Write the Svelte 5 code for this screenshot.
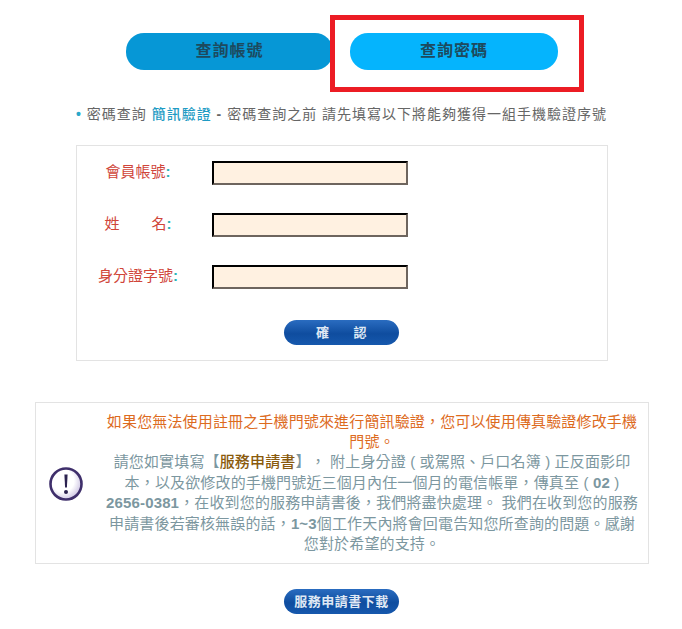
<script lang="ts">
  let fields = [
    { label: "會員帳號", wide: false, name: "account" },
    { label: "姓名", wide: true, name: "name" },
    { label: "身分證字號", wide: false, name: "id" }
  ];
</script>

<div class="page">
  <div class="tabs">
    <button class="tab dark">查詢帳號</button>
    <button class="tab light">查詢密碼</button>
    <div class="marker"></div>
  </div>

  <p class="intro">
    <span class="dot">•</span> 密碼查詢 <b class="blue">簡訊驗證</b> <b>-</b> 密碼查詢之前 請先填寫以下將能夠獲得一組手機驗證序號
  </p>

  <div class="form">
    {#each fields as f}
      <div class="row">
        <label for={f.name} class:spaced={f.wide}>
          {#if f.wide}<span>姓</span><span>名</span>{:else}{f.label}{/if}<i>:</i>
        </label>
        <input id={f.name} type="text" />
      </div>
    {/each}
    <div class="actions">
      <button class="pill confirm">確<span class="gap"></span>認</button>
    </div>
  </div>

  <div class="notice">
    <svg class="warn" width="36" height="36" viewBox="0 0 36 36">
      <defs>
        <radialGradient id="warnfill" cx="0.4" cy="0.4" r="0.65">
          <stop offset="0.55" stop-color="#fff" />
          <stop offset="1" stop-color="#c9bfe0" />
        </radialGradient>
      </defs>
      <circle cx="18" cy="18" r="15.5" fill="url(#warnfill)" stroke="#3f2f6b" stroke-width="2.6" />
      <path d="M16.4 8.5h3.2l-.7 13h-1.8z" fill="#2c2350" />
      <circle cx="18" cy="26" r="2" fill="#2c2350" />
    </svg>
    <div class="copy">
      <div class="orange">如果您無法使用註冊之手機門號來進行簡訊驗證，您可以使用傳真驗證修改手機門號。</div>
      請您如實填寫【<b class="brown">服務申請書</b>】， 附上身分證 ( 或駕照、戶口名簿 ) 正反面影印本，以及欲修改的手機門號近三個月內任一個月的電信帳單，傳真至 ( <b>02</b> ) <b>2656-0381</b>，在收到您的服務申請書後，我們將盡快處理。 我們在收到您的服務申請書後若審核無誤的話，<b>1~3</b>個工作天內將會回電告知您所查詢的問題。感謝您對於希望的支持。
    </div>
  </div>

  <div class="download">
    <button class="pill">服務申請書下載</button>
  </div>
</div>

<style>
  :global(body) {
    background: #fff;
  }
  .page {
    width: 682px;
    height: 629px;
    overflow: hidden;
    padding-top: 33px;
    box-sizing: border-box;
    font-family: "Liberation Sans", "Noto Sans CJK TC", sans-serif;
    font-size: 14px;
    text-spacing-trim: space-all;
  }
  button {
    font-family: inherit;
    border: 0;
    padding: 0;
  }
  .tabs {
    position: relative;
    display: flex;
    gap: 17px;
    margin-left: 126px;
  }
  .tab {
    height: 37px;
    padding-bottom: 5px;
    border-radius: 18px;
    font-size: 16px;
    font-weight: 700;
    letter-spacing: 1px;
    color: #1d4a5e;
  }
  .dark {
    width: 207px;
    background: #0697d6;
  }
  .light {
    width: 208px;
    background: #05b4fd;
  }
  .marker {
    position: absolute;
    left: 204px;
    top: -18px;
    width: 254px;
    height: 77px;
    box-sizing: border-box;
    border: 5px solid #ec1c24;
  }
  .intro {
    margin: 34px 0 0 76px;
    height: 20px;
    line-height: 20px;
    width: 560px;
    color: #666;
    letter-spacing: 1px;
    white-space: nowrap;
  }
  .dot {
    color: #2aa7c9;
    font-weight: 700;
  }
  .blue {
    color: #1f9bc4;
    font-weight: 500;
  }
  .form {
    margin: 21px 0 0 76px;
    width: 532px;
    height: 216px;
    box-sizing: border-box;
    border: 1px solid #e3e3e3;
    padding-top: 15px;
  }
  .row {
    display: flex;
    align-items: flex-start;
    height: 25px;
    margin-bottom: 27px;
  }
  label {
    width: 122px;
    margin-right: 13px;
    text-align: center;
    line-height: 22px;
    color: #d0453a;
    font-size: 15px;
    white-space: nowrap;
  }
  label i {
    font-style: normal;
    font-weight: 700;
    color: #2ab3b8;
  }
  label.spaced {
    display: flex;
    justify-content: center;
  }
  label.spaced span:first-child {
    margin-right: 32px;
  }
  input {
    width: 196px;
    height: 24px;
    box-sizing: border-box;
    background: #fff1e1;
    border: 2px inset #767676;
    border-color: #221a14 #6e655e #6e655e #221a14;
    padding: 0;
  }
  .actions {
    margin: 30px 0 0 207px;
    line-height: 0;
  }
  .pill {
    width: 115px;
    height: 25px;
    padding-bottom: 3px;
    border-radius: 13px;
    background: linear-gradient(#2a6cc0, #0f4d9f 55%, #1658ad);
    color: #dfe8f4;
    font-size: 13px;
    font-weight: 700;
    letter-spacing: 0.5px;
  }
  .gap {
    display: inline-block;
    width: 24px;
  }
  .notice {
    margin: 41px 0 0 35px;
    width: 614px;
    height: 162px;
    box-sizing: border-box;
    border: 1px solid #e3e3e3;
    display: flex;
    align-items: center;
  }
  .warn {
    margin-left: 12px;
    flex: none;
    position: relative;
    top: 1px;
  }
  .copy {
    width: 536px;
    margin-left: 20px;
    text-align: center;
    font-size: 15px;
    line-height: 20.4px;
    letter-spacing: 0.15px;
    color: #7c97a0;
  }
  .orange {
    color: #dd6b1e;
  }
  .brown {
    color: #8a5a0c;
    font-weight: 500;
  }
  .download {
    margin: 25px 0 0 284px;
    line-height: 0;
  }
</style>
